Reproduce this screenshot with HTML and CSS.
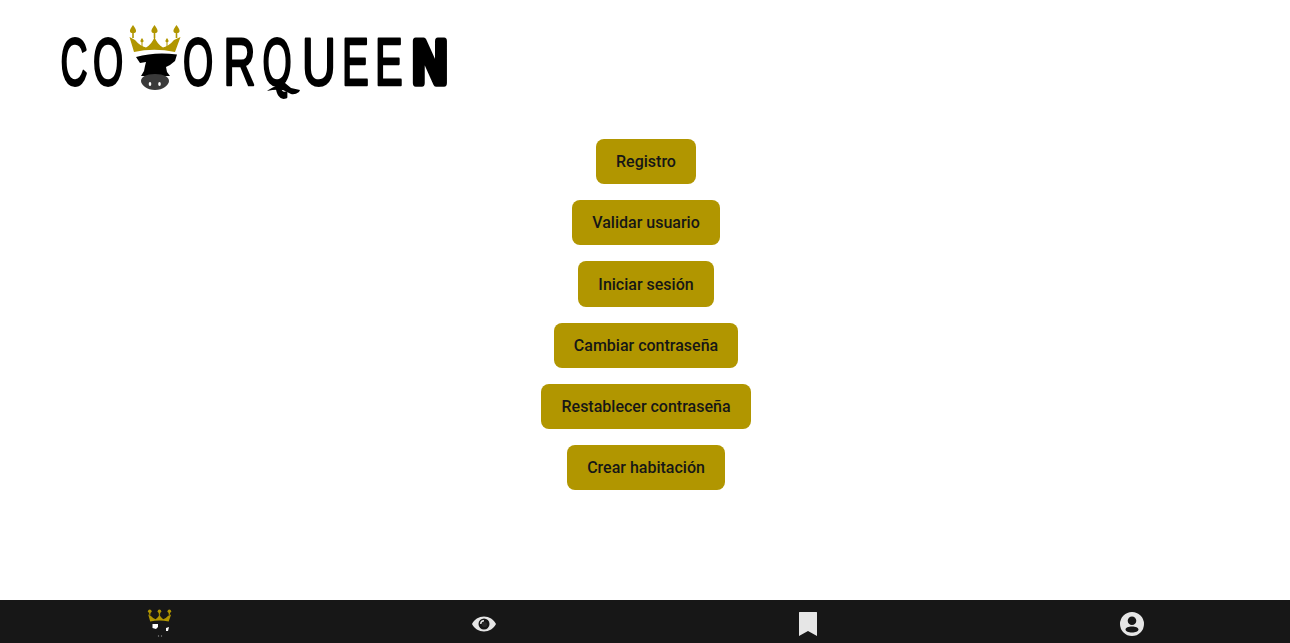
FILE: index.html
```html
<!DOCTYPE html>
<html lang="es">
<head>
<meta charset="utf-8">
<title>CoworQueen</title>
<link rel="stylesheet" href="styles.css">
</head>
<body>
<div class="page">
  <header class="header">
    <svg class="logo" width="400" height="80" viewBox="60 20 400 80" role="img" aria-label="CoworQueen">
      <defs>
        <g id="crown">
          <path d="M129.500 37L135 40Q140 46 146 47.500Q152 44 154.500 37Q157 44 163 47.500Q169 46 174 40L180.500 37L175 52Q154 47.500 134 52Z"/>
          <path d="M133 25c2 3 3.500 5 3 6.500-.3 1-1.500 1.500-2.200 1.500l0 5-1.600 0 0-5c-.7 0-1.900-.5-2.200-1.500-.5-1.500 1-3.500 3-6.500z"/>
          <path d="M154.500 25c2 3 3.500 5 3 6.500-.3 1-1.500 1.500-2.200 1.500l0 5-1.600 0 0-5c-.7 0-1.900-.5-2.200-1.500-.5-1.500 1-3.500 3-6.500z"/>
          <path d="M176.500 25c2 3 3.500 5 3 6.500-.3 1-1.500 1.500-2.200 1.500l0 5-1.600 0 0-5c-.7 0-1.900-.5-2.200-1.500-.5-1.500 1-3.500 3-6.500z"/>
          <path d="M142 38c1 1.500 1.800 2.500 1.500 3.500-.2.500-.6.800-1 .8l0 5-1 0 0-5c-.4 0-.8-.3-1-.8-.3-1 .5-2 1.500-3.500z"/>
          <path d="M167 38c1 1.500 1.800 2.500 1.500 3.500-.2.500-.6.800-1 .8l0 5-1 0 0-5c-.4 0-.8-.3-1-.8-.3-1 .5-2 1.500-3.500z"/>
        </g>
      </defs>
      <g class="logo-letters">
        <text class="l" transform="translate(60.500 85) scale(.56 1)">C</text>
        <text class="l" transform="translate(93 85) scale(.58 1)">O</text>
        <text class="l" transform="translate(183 85) scale(.58 1)">O</text>
        <text class="l" transform="translate(223.500 85) scale(.66 1)">R</text>
        <text class="l" transform="translate(262.500 85) scale(.56 1)">Q</text>
        <text class="l" transform="translate(302 85) scale(.7 1)">U</text>
        <text class="l" transform="translate(342 85) scale(.6 1)">E</text>
        <text class="l" transform="translate(375 85) scale(.62 1)">E</text>
        <text class="l n" transform="translate(412.500 82.500) scale(.72 .91)">N</text>
      </g>
      <path class="ink" d="M267 91C272 87 276 87 280 83L285 83L291 88L300 90L299 92Q295 95 291 94L283 90Q275 89 267 91Z"/>
      <use class="gold" href="#crown"/>
      <path class="ink" d="M136 57Q155 51.500 177 54.500L175 61L170 65L166 67L167 72L170 76L141 76L144 71L145 66L146 62L140 63Z"/>
      <path class="snout" d="M141 81c0-4 5-7 14-7s14 3 14 7-6 9-14 9-14-5-14-9z"/>
      <ellipse class="nostril" cx="150" cy="84" rx="1.300" ry="2"/>
      <ellipse class="nostril" cx="159.500" cy="84" rx="1.300" ry="2"/>
    </svg>
  </header>

  <main class="actions">
    <a class="btn" href="#">Registro</a>
    <a class="btn" href="#">Validar usuario</a>
    <a class="btn" href="#">Iniciar sesión</a>
    <a class="btn" href="#">Cambiar contraseña</a>
    <a class="btn" href="#">Restablecer contraseña</a>
    <a class="btn" href="#">Crear habitación</a>
  </main>

  <nav class="nav">
    <a class="nav-item" href="#" aria-label="Inicio">
      <svg width="26" height="32" viewBox="0 0 26 32">
        <g class="gold" transform="translate(1.200 1) scale(.45) translate(-129.500 -25)">
          <path d="M129.500 37L135 40Q140 46 146 47.500Q152 44 154.500 37Q157 44 163 47.500Q169 46 174 40L180.500 37L175 53Q154 48.500 134 53Z"/>
          <circle cx="133" cy="30" r="4"/><circle cx="154.500" cy="30" r="4"/><circle cx="176.500" cy="30" r="4"/>
          <path d="M131.500 30h3v8h-3zM153 30h3v8h-3zM175 30h3v8h-3z"/>
        </g>
        <path class="white" d="M5.500 16L11 16L11 19L9 21L5.500 20zM19 20L22 19L21 23L19 23z"/>
        <circle class="dim" cx="11.500" cy="28" r=".7"/><circle class="dim" cx="14.500" cy="28" r=".7"/>
      </svg>
    </a>
    <a class="nav-item" href="#" aria-label="Ver">
      <svg width="24" height="24" viewBox="0 0 24 24">
        <path class="icon" fill-rule="evenodd" d="M12 4.500C7 4.500 2 7.600 0 12c2 4.400 7 7.500 12 7.500s10-3.100 12-7.500c-2-4.400-7-7.500-12-7.500zM12 17.500a5.500 5.500 0 1 1 0-11 5.500 5.500 0 0 1 0 11z"/>
        <path class="icon" d="M12 8a4 4 0 0 0-4 4l1.500 0a2.500 2.500 0 0 1 2.500-2.500z"/>
        <circle class="pupil" cx="12.500" cy="12.500" r="2.600"/>
      </svg>
    </a>
    <a class="nav-item" href="#" aria-label="Guardados">
      <svg width="24" height="24" viewBox="0 0 24 24">
        <path class="icon" d="M3.500 0h17a.5.5 0 0 1 .5.5V24l-9-5-9 5V.5a.5.5 0 0 1 .5-.5z"/>
      </svg>
    </a>
    <a class="nav-item" href="#" aria-label="Cuenta">
      <svg width="24" height="24" viewBox="0 0 24 24">
        <path class="icon" fill-rule="evenodd" d="M12 0a12 12 0 1 0 0 24 12 12 0 0 0 0-24zm0 4.500a4.300 4.300 0 1 1 0 8.600 4.300 4.300 0 0 1 0-8.600zM12 14.500c3.500 0 6.500 1.300 6.500 3 0 1.700-3 3-6.500 3s-6.500-1.300-6.500-3c0-1.700 3-3 6.500-3z"/>
      </svg>
    </a>
  </nav>
</div>
</body>
</html>
```
FILE: styles.css
```css
html, body {
  margin: 0;
  padding: 0;
  height: 100%;
  overflow: hidden;
  background: #fff;
}
.page {
  height: 643px;
  display: flex;
  flex-direction: column;
  font-family: Roboto, "Liberation Sans", sans-serif;
}
.header {
  height: 139px;
  padding: 20px 0 0 60px;
  box-sizing: border-box;
  flex: none;
}
.logo { display: block; }
.l {
  font-family: "Liberation Sans", sans-serif;
  font-size: 67px;
  fill: #000;
  stroke: #000;
  stroke-width: 2.600;
  stroke-linejoin: round;
  vector-effect: non-scaling-stroke;
  text-rendering: geometricPrecision;
}
.l.n {
  stroke-width: 8;
  font-weight: 700;
}
.ink { fill: #000; }
.gold { fill: #b19600; }
.snout { fill: #3a3a3a; }
.nostril { fill: #fff; }
.white { fill: #fff; }
.dim { fill: #888; }
.icon { fill: #e6e6e6; }
.pupil { fill: #2a2a2a; }
.actions {
  flex: 1;
  display: flex;
  flex-direction: column;
  align-items: center;
  gap: 16px;
  padding-left: 2px;
}
.btn {
  box-sizing: border-box;
  height: 45.200px;
  display: flex;
  align-items: center;
  padding: .2px 20px 0;
  border-radius: 8px;
  background: #b19600;
  color: #161616;
  font-size: 16px;
  font-weight: 500;
  text-decoration: none;
}
.nav {
  flex: none;
  height: 43px;
  margin-left: -2px;
  background: #171717;
  display: grid;
  grid-template-columns: repeat(4, 324px);
}
.nav-item {
  display: flex;
  align-items: center;
  justify-content: center;
  padding-top: 5px;
}
```
